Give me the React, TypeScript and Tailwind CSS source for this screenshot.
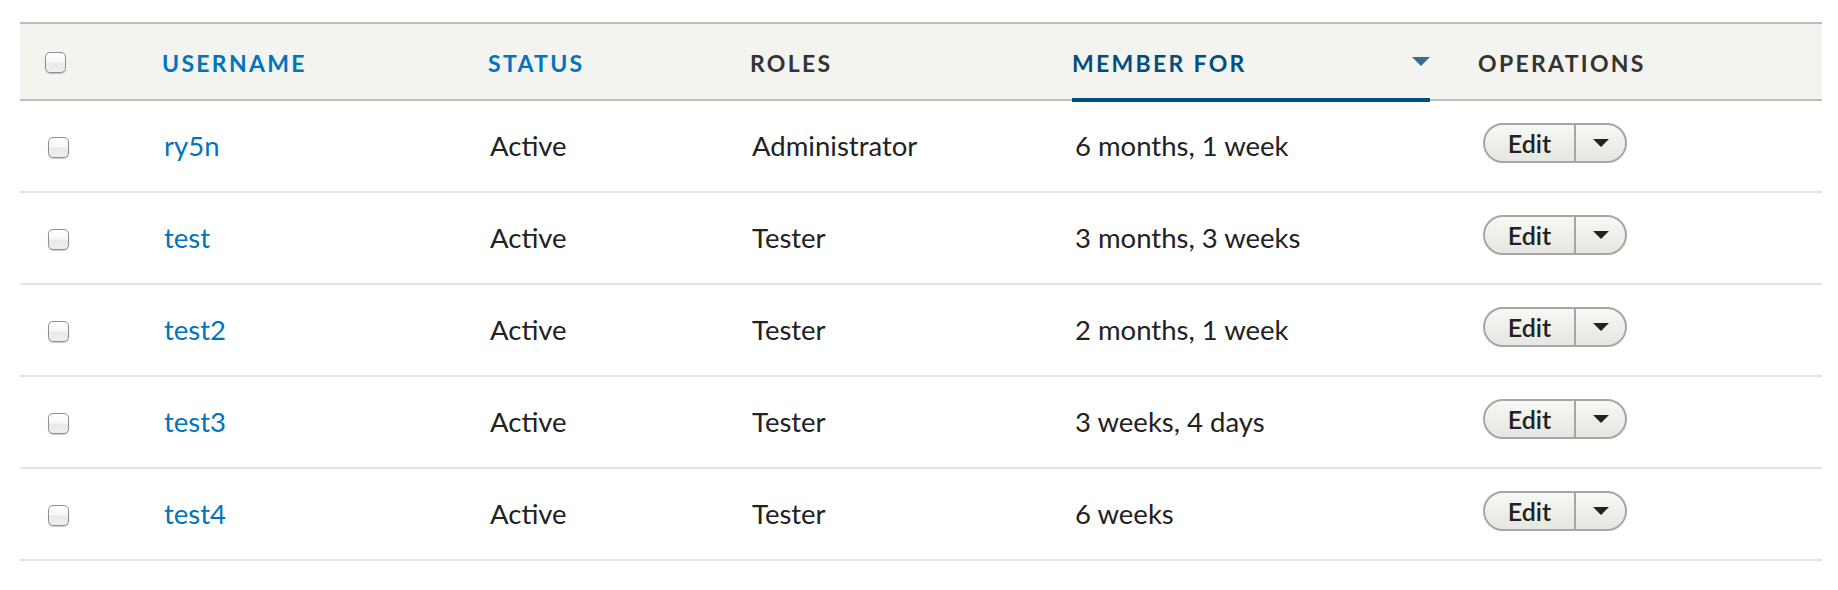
import React from 'react';

type Account = {
  name: string;
  status: string;
  role: string;
  memberFor: string;
};

const accounts: Account[] = [
  { name: 'ry5n', status: 'Active', role: 'Administrator', memberFor: '6 months, 1 week' },
  { name: 'test', status: 'Active', role: 'Tester', memberFor: '3 months, 3 weeks' },
  { name: 'test2', status: 'Active', role: 'Tester', memberFor: '2 months, 1 week' },
  { name: 'test3', status: 'Active', role: 'Tester', memberFor: '3 weeks, 4 days' },
  { name: 'test4', status: 'Active', role: 'Tester', memberFor: '6 weeks' },
];

const gridCols = 'grid grid-cols-[118px_326px_262px_322px_406px_368px]';

const Checkbox: React.FC<{ className?: string }> = ({ className = '' }) => (
  <input
    type="checkbox"
    className={`appearance-none block w-[21px] h-[21px] rounded-[5px] border border-[#8f8f8f] bg-[linear-gradient(to_bottom,#ffffff_0%,#f8f8f8_48%,#e9e9e9_52%,#efefef_100%)] shadow-[0_1px_1px_rgba(0,0,0,0.2)] ${className}`}
  />
);

const DropButton: React.FC = () => (
  <div className="ml-[5px] mb-[6px] inline-flex h-[40px] rounded-full border-2 border-[#a6a6a6] bg-[linear-gradient(to_bottom,#f7f7f3,#e6e6e1)] overflow-hidden">
    <button
      type="button"
      className="w-[89px] flex items-center justify-center text-[25px] font-semibold text-[#222] leading-none"
    >
      Edit
    </button>
    <button
      type="button"
      className="w-[51px] border-l-2 border-[#a6a6a6] flex items-center justify-center"
    >
      <svg width="16" height="8" viewBox="0 0 16 8">
        <path d="M0 0 L16 0 L8 8 Z" fill="#222" />
      </svg>
    </button>
  </div>
);

export default function App() {
  return (
    <div className="w-[1838px] h-[590px] bg-white pt-[22px] pl-[20px] font-['Lato','Liberation_Sans',sans-serif]">
      <div className="w-[1802px]">
        {/* header */}
        <div
          className={`${gridCols} h-[79px] border-y-2 border-[#bfbfba] bg-[#f3f3ef] items-center text-[23px] font-bold uppercase tracking-[0.1em]`}
        >
          <div className="px-[24px] pt-[2px]">
            <Checkbox className="ml-[1px]" />
          </div>
          <div className="px-[24px] pt-[4px] text-[#0074bd]">Username</div>
          <div className="px-[24px] pt-[4px] text-[#0074bd]">Status</div>
          <div className="px-[24px] pt-[4px] text-[#333]">Roles</div>
          <div className="px-[24px] self-stretch relative flex items-center text-[#004f80]">
            <div className="relative w-full h-full flex items-center justify-between">
              <span className="pt-[4px]">Member for</span>
              <svg width="18" height="9" viewBox="0 0 18 9">
                <path d="M0 0 L18 0 L9 9 Z" fill="#3a6c93" />
              </svg>
              <span className="absolute left-0 right-0 bottom-[-3px] h-[4px] bg-[#004f80]" />
            </div>
          </div>
          <div className="px-[24px] pt-[4px] text-[#333]">Operations</div>
        </div>

        {/* rows */}
        {accounts.map((a) => (
          <div
            key={a.name}
            className={`${gridCols} h-[92px] border-b-2 border-[#e6e4df] items-center text-[27.5px] text-[#222]`}
          >
            <div className="px-[24px] pt-[2px]">
              <Checkbox className="ml-[4px]" />
            </div>
            <div className="pl-[26px] pr-[24px]">
              <a href="#" className="text-[#0074bd]">
                {a.name}
              </a>
            </div>
            <div className="pl-[26px] pr-[24px]">{a.status}</div>
            <div className="pl-[26px] pr-[24px]">{a.role}</div>
            <div className="pl-[27px] pr-[24px]">{a.memberFor}</div>
            <div className="px-[24px] flex items-center">
              <DropButton />
            </div>
          </div>
        ))}
      </div>
    </div>
  );
}
